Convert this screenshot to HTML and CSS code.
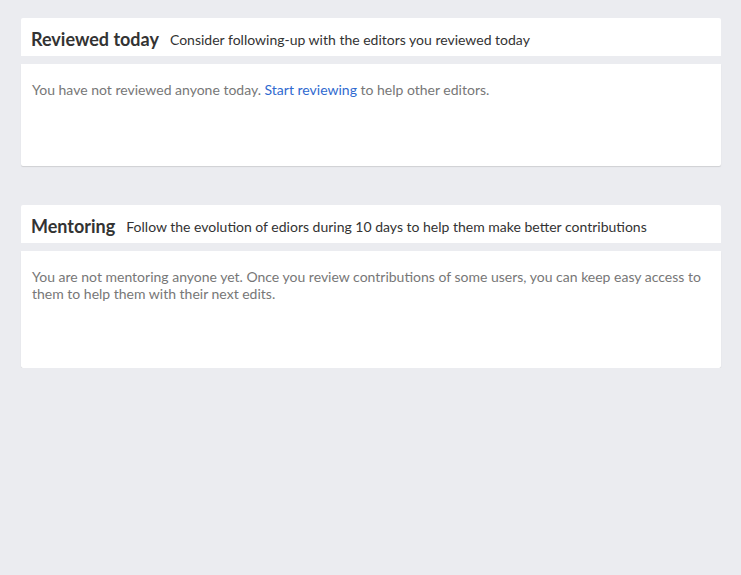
FILE: index.html
```html
<!DOCTYPE html>
<html>
<head>
<meta charset="utf-8">
<link rel="stylesheet" href="styles.css">
</head>
<body>
<main class="page">
  <section class="card">
    <header class="card-head">
      <h2 class="card-title">Reviewed today</h2>
      <span class="card-sub">Consider following-up with the editors you reviewed today</span>
    </header>
    <div class="card-body">
      <p class="empty">You have not reviewed anyone today. <a class="link" href="#">Start reviewing</a> to help other editors.</p>
    </div>
  </section>
  <section class="card">
    <header class="card-head">
      <h2 class="card-title">Mentoring</h2>
      <span class="card-sub">Follow the evolution of ediors during 10 days to help them make better contributions</span>
    </header>
    <div class="card-body tall">
      <p class="empty">You are not mentoring anyone yet. Once you review contributions of some users, you can keep easy access to them to help them with their next edits.</p>
    </div>
  </section>
</main>
</body>
</html>
```
FILE: styles.css
```css
html, body {
  margin: 0;
  padding: 0;
  background: #ebecf0;
  font-family: Lato, "Open Sans", sans-serif;
}
.page {
  padding: 18px 20px 0 21px;
  display: flex;
  flex-direction: column;
  gap: 39px;
}
.card {
  display: flex;
  flex-direction: column;
  gap: 8px;
}
.card-head {
  background: #fff;
  height: 38px;
  box-sizing: border-box;
  border-radius: 2px 2px 0 0;
  display: flex;
  align-items: center;
  padding: 4px 10px 0;
  gap: 11px;
}
.card-title {
  margin: 0;
  font-size: 18px;
  font-weight: 700;
  color: #333;
}
.card-sub {
  font-size: 14px;
  color: #333;
}
.card-body {
  background: #fff;
  height: 102px;
  box-sizing: border-box;
  padding: 17px 11px;
  border-radius: 0 0 2px 2px;
  box-shadow: 0 1px 1px rgba(0,0,0,0.12);
}
.card-body.tall {
  height: 117px;
}
.empty {
  margin: 0;
  font-size: 14px;
  line-height: 17px;
  color: #777;
}
.link {
  color: #2f6ad0;
  text-decoration: none;
}
```
